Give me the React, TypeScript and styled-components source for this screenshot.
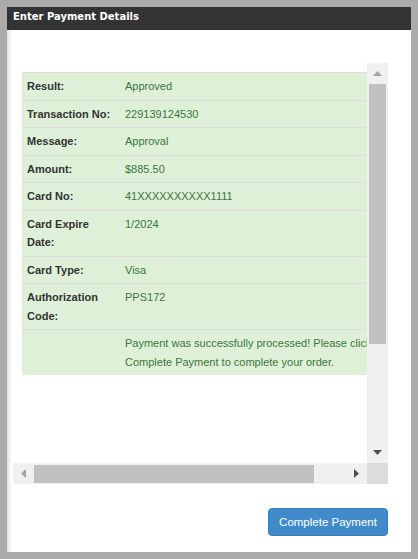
import React, { FC } from 'react';
import styled, { createGlobalStyle } from 'styled-components';

const GlobalStyle = createGlobalStyle`
    html, body {
        margin: 0;
        padding: 0;
        background: #ffffff;
    }
`;

type Row = {
    label: string;
    value: string;
};

const rows: Row[] = [
    { label: 'Result:', value: 'Approved' },
    { label: 'Transaction No:', value: '229139124530' },
    { label: 'Message:', value: 'Approval' },
    { label: 'Amount:', value: '$885.50' },
    { label: 'Card No:', value: '41XXXXXXXXXX1111' },
    { label: 'Card Expire Date:', value: '1/2024' },
    { label: 'Card Type:', value: 'Visa' },
    { label: 'Authorization Code:', value: 'PPS172' },
    { label: '', value: 'Payment was successfully processed! Please click Complete Payment to complete your order.' },
];

type ArrowProps = {
    dir: 'up' | 'down' | 'left' | 'right';
    enabled?: boolean;
};

const Arrow: FC<ArrowProps> = ({ dir, enabled }) => {
    const fill = enabled ? '#505050' : '#a3a3a3';
    const points = {
        up: '0,5 4.5,0 9,5',
        down: '0,0 9,0 4.5,5',
        left: '5,0 5,9 0,4.5',
        right: '0,0 5,4.5 0,9',
    }[dir];
    const vertical = dir === 'up' || dir === 'down';
    return (
        <svg width={vertical ? 9 : 5} height={vertical ? 5 : 9} viewBox={vertical ? '0 0 9 5' : '0 0 5 9'}>
            <polygon points={points} fill={fill} />
        </svg>
    );
};

export default function App() {
    return (
        <>
            <GlobalStyle />
            <Frame>
                <Header>Enter Payment Details</Header>
                <Body>
                    <ScrollArea>
                        <Viewport>
                            <Content>
                                <ResultTable>
                                    <colgroup>
                                        <LabelCol />
                                        <col />
                                    </colgroup>
                                    <tbody>
                                        {rows.map((r, i) => (
                                            <tr key={i}>
                                                <Label>{r.label}</Label>
                                                <Value>{r.value}</Value>
                                            </tr>
                                        ))}
                                    </tbody>
                                </ResultTable>
                            </Content>
                        </Viewport>
                        <VBar>
                            <BarButton><Arrow dir="up" /></BarButton>
                            <VTrack>
                                <VThumb size={260} />
                            </VTrack>
                            <BarButton><Arrow dir="down" enabled /></BarButton>
                        </VBar>
                        <HBar>
                            <BarButton><Arrow dir="left" /></BarButton>
                            <HTrack>
                                <HThumb size={280} />
                            </HTrack>
                            <BarButton><Arrow dir="right" enabled /></BarButton>
                        </HBar>
                        <Corner />
                    </ScrollArea>
                    <Footer>
                        <PrimaryButton>Complete Payment</PrimaryButton>
                    </Footer>
                </Body>
            </Frame>
        </>
    );
}

const Frame = styled.div`
    width: 418px;
    height: 559px;
    box-sizing: border-box;
    border: 7px solid #ababab;
    display: flex;
    flex-direction: column;
    background: #ffffff;
`;

const Header = styled.div`
    height: 23px;
    box-sizing: border-box;
    padding: 1px 6px 0;
    line-height: 17px;
    background: #333333;
    color: #ffffff;
    font-family: "DejaVu Sans", Verdana, sans-serif;
    font-weight: bold;
    font-size: 10px;
`;

const Body = styled.div`
    flex: 1;
    display: flex;
    flex-direction: column;
    padding: 33px 0 0 6px;
    box-shadow: inset 5px 0 4px -3px rgba(0, 0, 0, 0.14);
`;

const ScrollArea = styled.div`
    width: 375px;
    height: 421px;
    display: grid;
    grid-template-columns: 354px 21px;
    grid-template-rows: 400px 21px;
`;

const Viewport = styled.div`
    overflow: hidden;
`;

const Content = styled.div`
    padding: 9px;
    width: 377px;
    height: 533px;
`;

const ResultTable = styled.table`
    width: 377px;
    table-layout: fixed;
    border-collapse: collapse;
    background: #dff0d8;
    font-family: "Liberation Sans", Arial, sans-serif;
    font-size: 11px;
    line-height: 18.5px;
`;

const LabelCol = styled.col`
    width: 98px;
`;

const Label = styled.td`
    padding: 4px 5px;
    border-top: 1px solid #dddddd;
    vertical-align: top;
    font-weight: bold;
    color: #333333;
`;

const Value = styled.td`
    padding: 4px 5px;
    border-top: 1px solid #dddddd;
    vertical-align: top;
    color: #3c763d;
`;

const BarButton = styled.div`
    width: 21px;
    height: 21px;
    display: flex;
    align-items: center;
    justify-content: center;
    background: #f0f0f0;
    flex-shrink: 0;
`;

const VBar = styled.div`
    display: flex;
    flex-direction: column;
    background: #f0f0f0;
`;

const VTrack = styled.div`
    flex: 1;
    display: flex;
    flex-direction: column;
    padding: 0 2px;
`;

const VThumb = styled.div<{ size: number }>`
    height: ${({ size }) => size}px;
    background: #c1c1c1;
`;

const HBar = styled.div`
    display: flex;
    background: #f0f0f0;
`;

const HTrack = styled.div`
    flex: 1;
    display: flex;
    padding: 2px 0 1px;
`;

const HThumb = styled.div<{ size: number }>`
    width: ${({ size }) => size}px;
    background: #c1c1c1;
`;

const Corner = styled.div`
    background: #dcdcdc;
`;

const Footer = styled.div`
    width: 375px;
    display: flex;
    justify-content: flex-end;
    margin-top: 24px;
`;

const PrimaryButton = styled.button`
    width: 120px;
    height: 28px;
    padding: 0;
    border: 1px solid #357ebd;
    border-radius: 4px;
    background: #428bca;
    color: #ffffff;
    font-family: "Liberation Sans", Arial, sans-serif;
    font-size: 11.5px;
    cursor: pointer;
`;
